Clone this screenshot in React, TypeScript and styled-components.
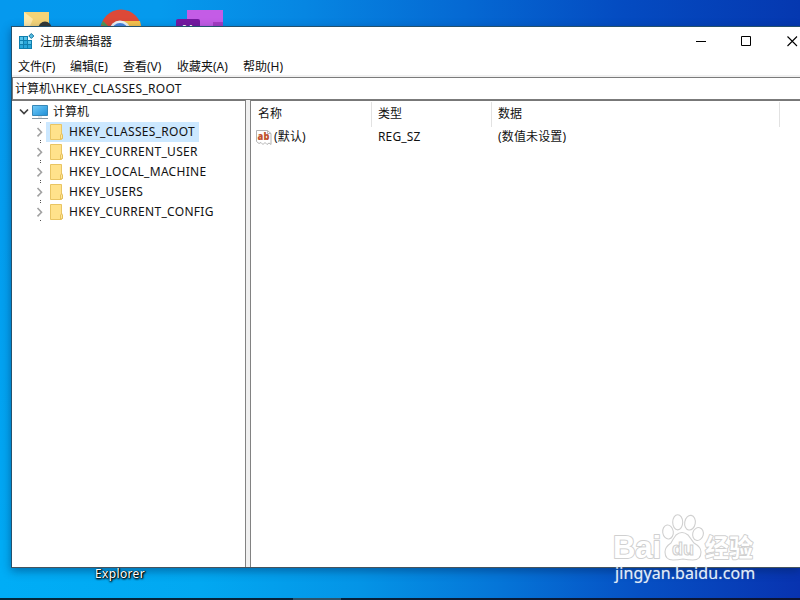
import React from "react";
import styled, { createGlobalStyle } from "styled-components";

const Global = createGlobalStyle`
  html, body { margin: 0; padding: 0; overflow: hidden; }
  * { box-sizing: border-box; }
  svg { display: block; flex: none; }
`;

const Desktop = styled.main`
  position: relative;
  width: 800px;
  height: 600px;
  overflow: hidden;
  display: flex;
  flex-direction: column;
  color: #111;
  font: 12px/20px "Noto Sans", "Noto Sans CJK SC", sans-serif;
  background:
    linear-gradient(90deg, #00adf6 0%, #02a8f1 25%, #0494e6 45%, #0576d8 62%, #0650c4 80%, #0833b0 100%) bottom / 100% 60px no-repeat,
    linear-gradient(180deg, transparent 10%, rgba(0, 174, 246, 0.85)) left / 12px 100% no-repeat,
    linear-gradient(90deg, #0599ee 0%, #059aed 20%, #0686e2 38%, #0569d3 58%, #044bc1 78%, #0538b0 100%);
`;

const DesktopIcons = styled.div`
  display: flex;
  height: 26px;
`;

const Window = styled.section`
  display: flex;
  flex-direction: column;
  width: 789px;
  height: 542px;
  margin-left: 11px;
  background: #fff;
  border: 1px solid #24516d;
  border-right: 0;
  border-bottom-color: #46545e;
  box-shadow: 0 3px 9px rgba(0, 30, 80, 0.45);
`;

const TitleBar = styled.header`
  display: flex;
  align-items: center;
  height: 29px;
  padding-left: 6px;
`;

const Title = styled.h1`
  flex: 1;
  margin: 0 0 0 5px;
  font-size: 12px;
  font-weight: 400;
`;

const WindowButton = styled.button<{ $width: number; $inset?: number }>`
  display: flex;
  justify-content: center;
  width: ${(p) => p.$width}px;
  padding: 0 0 0 ${(p) => p.$inset ?? 0}px;
  border: 0;
  background: none;
`;

const MenuBar = styled.nav`
  display: flex;
  align-items: center;
  height: 21px;
  padding-top: 2px;
  border-bottom: 2px solid #f0f0f0;
`;

const MenuItem = styled.span<{ $width: number }>`
  width: ${(p) => p.$width}px;
  padding-left: 6px;
  white-space: nowrap;
`;

const AddressBar = styled.div`
  display: flex;
  align-items: center;
  height: 23px;
  padding-left: 2px;
  border: solid #7b7b7b;
  border-width: 1px 0 1px 1px;
`;

const KeyName = styled.span`
  white-space: pre;
  letter-spacing: 0.3px;
`;

const Panes = styled.div`
  display: flex;
  flex: 1;
`;

const Tree = styled.div`
  width: 234px;
  padding-top: 1px;
  border: 1px solid #828282;
  border-top-color: #777;
  border-bottom: 0;
  border-left: 0;
`;

const TreeRow = styled.div<{ $level: number }>`
  display: flex;
  align-items: center;
  height: 20px;
  padding-left: ${(p) => 7 + p.$level * 16}px;
`;

const TreeLabel = styled.div<{ $selected?: boolean; $gap: number; $pad: number; $indent?: number; $width?: number }>`
  display: flex;
  align-items: center;
  height: 20px;
  width: ${(p) => (p.$width ? `${p.$width}px` : "auto")};
  margin-left: ${(p) => p.$indent ?? 0}px;
  padding-left: ${(p) => p.$pad}px;
  gap: ${(p) => p.$gap}px;
  background: ${(p) => (p.$selected ? "#cce8ff" : "transparent")};
`;

const Splitter = styled.div`
  width: 5px;
  background: #f0f0f0;
  border-right: 1px solid #828282;
`;

const List = styled.div`
  flex: 1;
  border-top: 1px solid #777;
`;

const HeaderRow = styled.div`
  display: grid;
  grid-template-columns: 121px 120px 288px 1fr;
  height: 26px;
  padding-top: 1px;
`;

const HeaderCell = styled.div`
  padding: 2px 0 0 6px;
  border-right: 1px solid #e2e2e2;
  &:first-child { padding-left: 7px; }
  &:last-child { border: 0; }
`;

const ValueRow = styled.div`
  display: grid;
  grid-template-columns: 121px 120px 1fr;
  height: 20px;
`;

const ValueCell = styled.div`
  display: flex;
  align-items: center;
  padding-left: 6px;
  letter-spacing: 0.15px;
  &:first-child { padding-left: 5px; gap: 2px; }
`;

const Caption = styled.div`
  height: 30px;
  padding-left: 95px;
  color: #fff;
  line-height: 12px;
  letter-spacing: 0.35px;
  text-shadow: 1px 1px 2px #000, 0 1px 2px #000, 1px 0 1px #000;
  z-index: 1;
`;

const Taskbar = styled.footer`
  height: 2px;
  padding-left: 293px;
  background: linear-gradient(90deg, #03283b, #0c1436);
`;

const ActiveTask = styled.div`
  width: 48px;
  height: 2px;
  background: #2d5269;
`;

const Watermark = styled.aside`
  position: absolute;
  z-index: 2;
  left: 610px;
  top: 510px;
`;

const Site = styled.div`
  padding-left: 5px;
  margin-top: -1px;
  color: #e0ecfb;
  font: 16px/22px "Noto Sans", sans-serif;
  letter-spacing: 0.1px;
  text-shadow: 0 0 1px #7793b8;
  white-space: nowrap;
`;

const RegistryIcon = () => (
  <svg width="17" height="17" viewBox="0 0 17 17">
    <path d="M1 3h9v4h4v9H1z" fill="#0f7fae" />
    <path d="M2 4h3v3H2zM6 4h3v3H6zM2 8h3v3H2zM10 8h3v3h-3z" fill="#56c3ea" />
    <path d="M6 8h3v3H6zM2 12h3v3H2zM6 12h3v3H6zM10 12h3v3h-3z" fill="#27a5d8" />
    <path d="M13.3.5l2.5 2.5-2.5 2.5L10.8 3z" fill="#53bbe1" stroke="#18759f" />
  </svg>
);

const ComputerIcon = () => (
  <svg width="17" height="16" viewBox="0 0 17 16">
    <defs>
      <linearGradient id="screen" x2="1" y2="1">
        <stop stopColor="#78cdf9" />
        <stop offset=".5" stopColor="#48aee9" />
        <stop offset="1" stopColor="#218fd5" />
      </linearGradient>
    </defs>
    <path d="M.5 1.5h15v10H.5z" fill="url(#screen)" stroke="#3688b8" />
    <path d="M6 12h4v2H6z" fill="#e3e7ea" />
    <path d="M0 14.5h16" stroke="#8798a3" />
  </svg>
);

const FolderIcon = () => (
  <svg width="13" height="16" viewBox="0 0 13 16">
    <path d="M.5.5h11v10l1 1v3l-1 1H.5z" fill="#ffe28b" stroke="#e9c563" />
    <path d="M10.5 15v-4l1.3-1.3.7 1.3v3.5z" fill="#ffe79a" stroke="#dfb950" strokeWidth=".8" />
  </svg>
);

const Chevron = ({ open = false }: { open?: boolean }) => (
  <svg width={open ? 10 : 9} height="20" viewBox={`0 0 ${open ? 10 : 9} 20`}>
    {open ? (
      <path d="M1 7.5l4 4 4-4" fill="none" stroke="#404040" strokeWidth="1.7" />
    ) : (
      <>
        <path d="M2.5 6l4 4.2-4 4.2" fill="none" stroke="#a2a2a2" strokeWidth="1.6" />
        <path d="M5 .5h1M5 18.5h1" stroke="#555" />
      </>
    )}
  </svg>
);

const StringIcon = () => (
  <svg width="16" height="17" viewBox="0 0 16 17">
    <path d="M.5 1.5h11l3.5 3v11l-2-1.5-2 1.5-2-2-2 2-2-2-2 1-2.5-2z" fill="#fff" stroke="#b4b4b4" />
    <path d="M11.5 1.5v3H15" fill="none" stroke="#bbb" />
    <text x="1.5" y="11" fontFamily="Open Sans" fontSize="10.5" fontWeight="800" textLength="12" lengthAdjust="spacingAndGlyphs" fill="#c0522d">ab</text>
  </svg>
);

const TopIcons = () => (
  <svg width="240" height="26" viewBox="0 0 240 26">
    <path d="M24 12h25v14H24z" fill="#f5d477" />
    <path d="M24 12l9 7-3 7h-6z" fill="#ffe9a8" />
    <circle cx="45" cy="28" r="6.5" fill="#343936" />
    <circle cx="121" cy="30" r="20.5" fill="#dc4938" />
    <path d="M121 21h19l1 5h-20z" fill="#f7c34b" />
    <path d="M101 25l2-4 6 6z" fill="#4b9b57" />
    <circle cx="120" cy="31" r="10.5" fill="#eef3f7" />
    <circle cx="120" cy="31" r="8" fill="#4685df" />
    <path d="M187 10h36v16h-36z" fill="#c45ce6" />
    <path d="M213 22h10v4h-10z" fill="#a63dc4" />
    <rect x="176" y="19" width="24" height="10" rx="2" fill="#7519a1" />
    <text x="182" y="35" fontFamily="Liberation Sans" fontWeight="700" fontSize="15" fill="#fff">N</text>
  </svg>
);

const BaiduMark = () => (
  <svg width="150" height="53" viewBox="0 0 150 53">
    <g fill="#fff" stroke="#d0d0d0" strokeWidth="2" paintOrder="stroke" strokeLinejoin="round">
      <text x="3" y="48" fontFamily="Liberation Sans" fontSize="31" fontWeight="700" textLength="48">Bai</text>
      <text x="95" y="47" fontFamily="Noto Sans CJK SC" fontSize="25" fontWeight="700" textLength="48" lengthAdjust="spacingAndGlyphs">经验</text>
    </g>
    <g fill="#fff" stroke="#d0d0d0" strokeWidth="1.1">
      <ellipse cx="58" cy="22" rx="5.3" ry="7" transform="rotate(-8 58 22)" />
      <ellipse cx="67.7" cy="12.3" rx="5" ry="7.6" />
      <ellipse cx="80" cy="12.7" rx="5.3" ry="7.4" transform="rotate(10 80 12.7)" />
      <ellipse cx="88" cy="24" rx="5.3" ry="6.5" transform="rotate(15 88 24)" />
      <path d="M66 25q6-5 12 0 3 4 6 8 7 4 7 9 0 8-8 8-5 0-10-1-5 1-10 1-8 0-8-8 0-5 6-9 2-4 5-8z" />
      <text x="62" y="45" fontFamily="Liberation Sans" fontSize="19" fontWeight="700" textLength="22" lengthAdjust="spacingAndGlyphs">du</text>
    </g>
  </svg>
);

const hives = ["HKEY_CLASSES_ROOT", "HKEY_CURRENT_USER", "HKEY_LOCAL_MACHINE", "HKEY_USERS", "HKEY_CURRENT_CONFIG"];

const menus: [string, number][] = [["文件(F)", 52], ["编辑(E)", 53], ["查看(V)", 54], ["收藏夹(A)", 66], ["帮助(H)", 60]];

export default function App() {
  return (
    <>
      <Global />
      <Desktop>
        <DesktopIcons><TopIcons /></DesktopIcons>
        <Window>
          <TitleBar>
            <RegistryIcon />
            <Title>注册表编辑器</Title>
            <WindowButton $width={46} aria-label="最小化">
              <svg width="11" height="11"><path d="M0 5.5h10" stroke="#000" /></svg>
            </WindowButton>
            <WindowButton $width={45} aria-label="最大化">
              <svg width="11" height="11"><path d="M.5.5h9v9h-9z" fill="none" stroke="#000" /></svg>
            </WindowButton>
            <WindowButton $width={31} $inset={15} aria-label="关闭">
              <svg width="11" height="11"><path d="M.5.5l9.5 9.5M10 .5L.5 10" stroke="#000" strokeWidth="1.1" /></svg>
            </WindowButton>
          </TitleBar>
          <MenuBar>
            {menus.map(([label, width]) => <MenuItem key={label} $width={width}>{label}</MenuItem>)}
          </MenuBar>
          <AddressBar>计算机<KeyName>\HKEY_CLASSES_ROOT</KeyName></AddressBar>
          <Panes>
            <Tree>
              <TreeRow $level={0}>
                <Chevron open />
                <TreeLabel $pad={3} $gap={4}><ComputerIcon />计算机</TreeLabel>
              </TreeRow>
              {hives.map((name, i) => (
                <TreeRow key={name} $level={1}>
                  <Chevron />
                  <TreeLabel $indent={2} $pad={4} $gap={6} $selected={i === 0} $width={i === 0 ? 153 : undefined}>
                    <FolderIcon /><KeyName>{name}</KeyName>
                  </TreeLabel>
                </TreeRow>
              ))}
            </Tree>
            <Splitter />
            <List>
              <HeaderRow>
                <HeaderCell>名称</HeaderCell><HeaderCell>类型</HeaderCell><HeaderCell>数据</HeaderCell><HeaderCell />
              </HeaderRow>
              <ValueRow>
                <ValueCell><StringIcon />(默认)</ValueCell>
                <ValueCell>REG_SZ</ValueCell>
                <ValueCell>(数值未设置)</ValueCell>
              </ValueRow>
            </List>
          </Panes>
        </Window>
        <Caption>Explorer</Caption>
        <Taskbar><ActiveTask /></Taskbar>
        <Watermark><BaiduMark /><Site>jingyan.baidu.com</Site></Watermark>
      </Desktop>
    </>
  );
}
